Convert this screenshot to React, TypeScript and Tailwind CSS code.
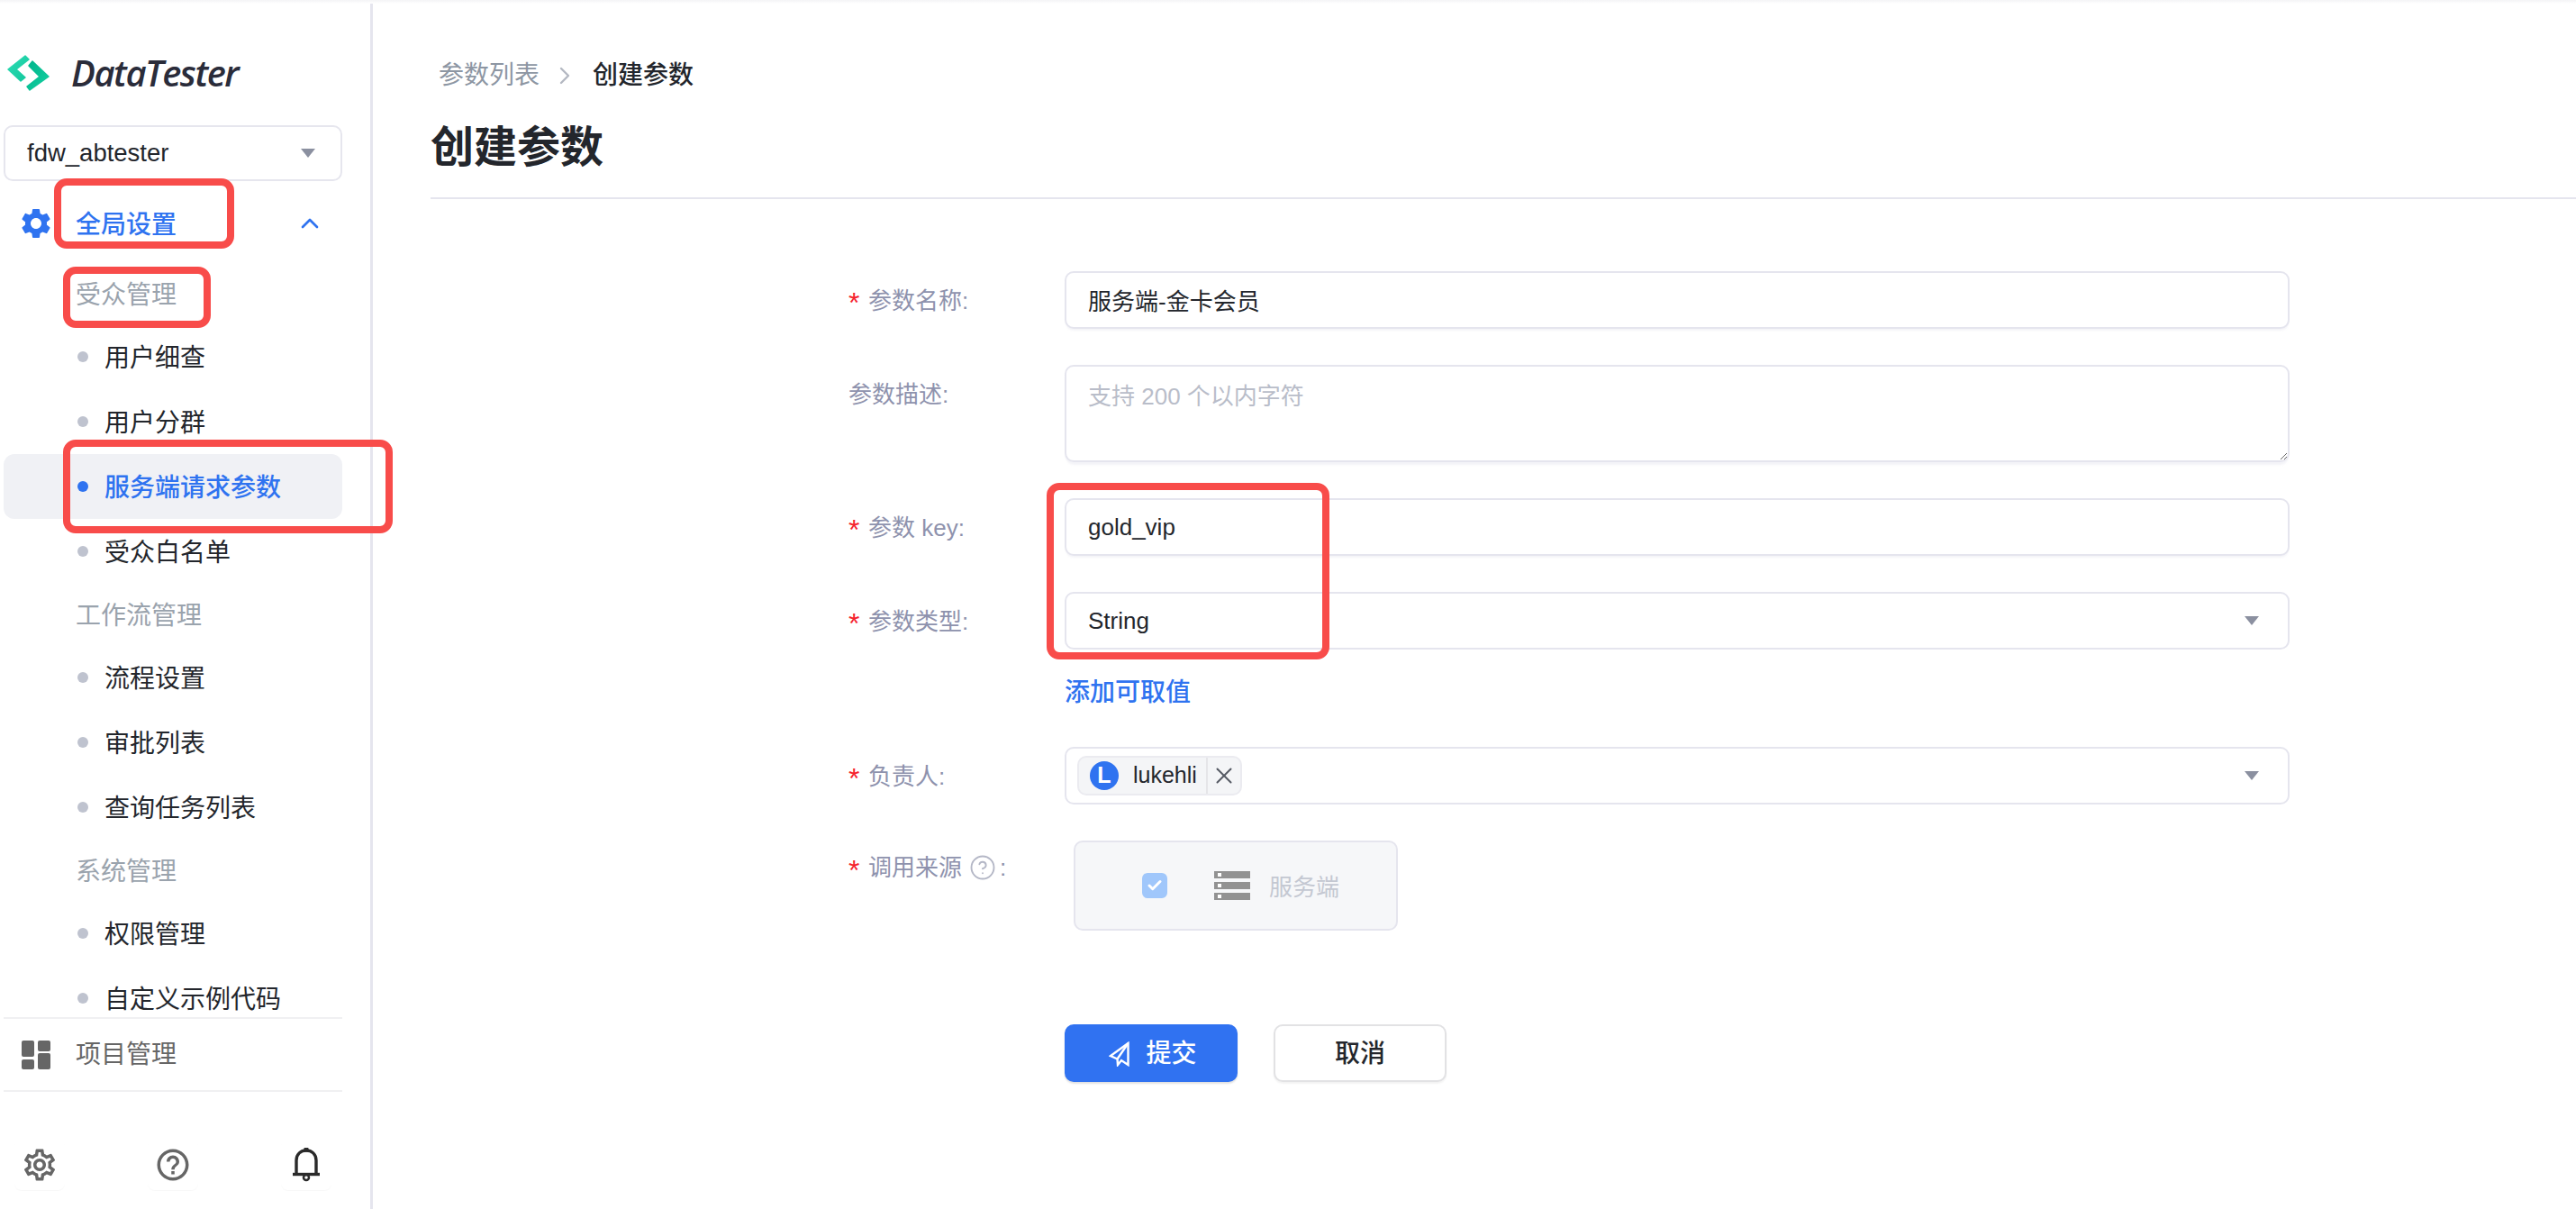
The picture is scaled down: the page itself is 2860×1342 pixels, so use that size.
import { Check, ChevronRight, ChevronUp, CircleHelp, X } from 'lucide-react';
import type { ReactNode } from 'react';
import { MdHelpOutline, MdOutlineSettings, MdSettings } from 'react-icons/md';

const font = 'font-["Liberation_Sans","Noto_Sans_CJK_SC",sans-serif]';

function Triangle() {
    return <span className="h-0 w-0 border-x-[8px] border-t-[10px] border-x-transparent border-t-[#8b90a0]" />;
}

function Logo() {
    return (
        <svg width="50" height="44" viewBox="0 0 50 44" className="mt-1 shrink-0">
            <defs>
                <linearGradient id="logoA" x1="0" y1="0" x2="1" y2="1">
                    <stop offset="0" stopColor="#2ddcb4" />
                    <stop offset="1" stopColor="#12c79c" />
                </linearGradient>
                <linearGradient id="logoB" x1="0" y1="0" x2="1" y2="1">
                    <stop offset="0" stopColor="#00b48c" />
                    <stop offset="1" stopColor="#14d0a0" />
                </linearGradient>
            </defs>
            <polygon points="20,1 24,5 10,16 20,25 15,29 1,16" fill="url(#logoA)" stroke="url(#logoA)" strokeWidth="1.500" strokeLinejoin="round" />
            <polygon points="28,7 46,24 25,39 22,35 36,24 24,12" fill="url(#logoB)" stroke="url(#logoB)" strokeWidth="1.500" strokeLinejoin="round" />
        </svg>
    );
}

function Item({ label, active }: { label: string; active?: boolean }) {
    return (
        <div className={active ? 'flex h-[72px] items-center rounded-xl bg-[#f0f1f5] pl-[82px]' : 'flex h-[72px] items-center pl-[82px]'}>
            <span className={active ? 'size-3 rounded-full bg-[#2f73f0]' : 'size-3 rounded-full bg-[#bfc3cf]'} />
            <span className={active ? 'ml-[18px] pt-1 text-[28px] font-medium text-[#2f73f0]' : 'ml-[18px] pt-1 text-[28px] text-[#23262c]'}>{label}</span>
        </div>
    );
}

function Section({ label }: { label: string }) {
    return <div className="flex h-[68px] items-center pl-[80px] pt-1 text-[28px] text-[#9aa3ad]">{label}</div>;
}

function Sidebar() {
    return (
        <aside className="flex h-full w-[414px] shrink-0 flex-col border-r-[3px] border-[#e5e5ee]">
            <div className="flex h-[135px] items-center pl-[8px] pt-[18px]">
                <Logo />
                <span className='ml-[21px] font-["Open_Sans"] text-[40px] font-semibold italic tracking-[-1.5px] text-[#2a2c3a]'>DataTester</span>
            </div>
            <div className="ml-1 flex h-[62px] w-[376px] items-center justify-between rounded-[10px] border-2 border-[#e6e6ee] pl-[24px] pr-[28px]">
                <span className="text-[27.5px] text-[#23262c]">fdw_abtester</span>
                <Triangle />
            </div>
            <div className="ml-1 mt-[11px] h-[917px] w-[376px] overflow-hidden">
                <div className="mb-2 flex h-[72px] items-center pl-4 text-[#2f73f0]">
                    <MdSettings size={40} />
                    <span className="ml-6 pt-1 text-[28px] font-medium">全局设置</span>
                    <ChevronUp size={32} strokeWidth={2} className="ml-[132px]" />
                </div>
                <Section label="受众管理" />
                <Item label="用户细查" />
                <Item label="用户分群" />
                <Item label="服务端请求参数" active />
                <Item label="受众白名单" />
                <Section label="工作流管理" />
                <Item label="流程设置" />
                <Item label="审批列表" />
                <Item label="查询任务列表" />
                <Section label="系统管理" />
                <Item label="权限管理" />
                <Item label="自定义示例代码" />
            </div>
            <div className="ml-1 flex h-[83px] w-[376px] items-center border-y-2 border-[#f0f0f2] pl-5 text-[#666666]">
                <svg width="32" height="32" viewBox="0 0 32 32" fill="currentColor">
                    <rect x="0" y="0" width="14" height="18" rx="2" />
                    <rect x="0" y="21" width="14" height="11" rx="2" />
                    <rect x="18" y="0" width="14" height="12" rx="2" />
                    <rect x="18" y="14" width="14" height="18" rx="2" />
                </svg>
                <span className="ml-[28px] text-[28px]">项目管理</span>
            </div>
            <div className="flex gap-[92px] pl-4 pt-[53px]">
                <div className="flex h-14 w-14 items-center justify-center rounded-lg text-[#666666] shadow-[0_1px_1px_rgba(0,0,0,0.03)]">
                    <MdOutlineSettings size={42} />
                </div>
                <div className="flex h-14 w-14 items-center justify-center rounded-lg text-[#666666] shadow-[0_1px_1px_rgba(0,0,0,0.03)]">
                    <MdHelpOutline size={42} />
                </div>
                <div className="flex h-14 w-14 items-center justify-center rounded-lg text-[#2a2a2a] shadow-[0_1px_1px_rgba(0,0,0,0.03)]">
                    <svg width="32" height="38" viewBox="0 0 32 38" fill="none" stroke="currentColor" strokeWidth="3.400">
                        <path d="M5 29V14C5 7 10 3 16 3S27 7 27 14V29" />
                        <path d="M1 29.500H31" />
                        <circle cx="16" cy="2" r="1" fill="currentColor" />
                        <circle cx="16" cy="33" r="3" strokeWidth="2.500" />
                    </svg>
                </div>
            </div>
        </aside>
    );
}

function Star() {
    return <span className="w-[22px] pt-[6px] text-[32px] leading-none text-[#f5222d]">*</span>;
}

function Label({ text, required }: { text: ReactNode; required?: boolean }) {
    return (
        <div className="flex h-16 w-[240px] shrink-0 items-center text-[26px] text-[#8e92ad]">
            {required && <Star />}
            <span className="pt-[2px]">{text}</span>
            <span className="pt-[2px]">:</span>
        </div>
    );
}

const boxClass = 'h-16 w-full rounded-[10px] border-2 border-[#e5e5ee] bg-white pl-6 text-[26px] text-[#23262c] shadow-[0_3px_2px_-1px_rgba(230,230,240,0.45)] outline-none';

function Form() {
    return (
        <div className="ml-[528px] mt-[80px] flex w-[1600px] flex-col">
            <div className="mb-10 flex">
                <Label text="参数名称" required />
                <input className={`${boxClass} pb-[2px]`} defaultValue="服务端-金卡会员" />
            </div>
            <div className="mb-10 flex">
                <Label text="参数描述" />
                <textarea
                    className="h-[108px] w-full rounded-[10px] border-2 border-[#e5e5ee] bg-white py-[14px] pl-6 text-[26px] text-[#23262c] shadow-[0_4px_2px_-1px_rgba(230,230,240,0.45)] outline-none placeholder:text-[#b9bdc9]"
                    placeholder="支持 200 个以内字符"
                />
            </div>
            <div className="mb-10 flex">
                <Label text="参数 key" required />
                <input className={boxClass} defaultValue="gold_vip" />
            </div>
            <div className="flex">
                <Label text="参数类型" required />
                <div className="flex h-16 w-full items-center justify-between rounded-[10px] border-2 border-[#e5e5ee] pl-6 pr-[32px] text-[26px] text-[#23262c]">
                    String
                    <Triangle />
                </div>
            </div>
            <div className="ml-[240px] mt-[28px] h-[40px] text-[28px] font-medium leading-[40px] text-[#2f73f0]">添加可取值</div>
            <div className="mt-10 flex">
                <Label text="负责人" required />
                <div className="flex h-16 w-full items-center justify-between rounded-[10px] border-2 border-[#e5e5ee] pl-3 pr-[32px]">
                    <div className="flex h-11 items-center rounded-[10px] border-2 border-[#ebebf0] bg-[#f4f5f7]">
                        <span className="ml-3 flex size-8 items-center justify-center rounded-full bg-[#2f73f0] text-[25px] font-bold text-white">L</span>
                        <span className="ml-4 mr-[10px] text-[25px] text-[#23262c]">lukehli</span>
                        <span className="flex h-full w-[38px] items-center justify-center border-l-2 border-[#e5e5e8] text-[#555a64]">
                            <X size={30} strokeWidth={1.6} />
                        </span>
                    </div>
                    <Triangle />
                </div>
            </div>
            <div className="mt-10 flex">
                <div className="flex h-[60px] w-[250px] shrink-0 items-center text-[26px] text-[#8e92ad]">
                    <Star />
                    调用来源
                    <CircleHelp size={30} strokeWidth={1.5} className="ml-[8px] text-[#b4b7c6]" />
                    <span className="ml-[4px]">:</span>
                </div>
                <div className="flex h-[100px] w-[360px] items-center rounded-[10px] border-2 border-[#e5e5ee] bg-[#f6f7f9] pl-[74px]">
                    <span className="flex size-7 items-center justify-center rounded-md bg-[#a0c7fb] text-white">
                        <Check size={18} strokeWidth={4} />
                    </span>
                    <svg width="40" height="32" viewBox="0 0 40 32" className="ml-[52px]">
                        <rect x="0" y="0" width="40" height="8" fill="#929292" />
                        <rect x="0" y="12" width="40" height="8" fill="#929292" />
                        <rect x="0" y="24" width="40" height="8" fill="#929292" />
                        <rect x="4" y="2" width="4" height="4" fill="#ffffff" />
                        <rect x="4" y="14" width="4" height="4" fill="#ffffff" />
                        <rect x="4" y="26" width="4" height="4" fill="#ffffff" />
                    </svg>
                    <span className="ml-[21px] pt-1 text-[26px] text-[#c4c8d2]">服务端</span>
                </div>
            </div>
            <div className="ml-[240px] mt-[104px] flex gap-10">
                <button className="flex h-16 w-[192px] items-center justify-center rounded-[10px] bg-[#3072f1] pl-[4px] pt-[2px] text-[28px] font-medium text-white shadow-[0_2px_2px_rgba(0,0,0,0.12)]">
                    <svg width="23" height="28" viewBox="0 0 23 28" fill="none" stroke="currentColor" strokeWidth="2.400" className="mr-[18px]">
                        <path d="M21.500 2 L2 16 L9.500 19.500 L10 26 L14 21 L21.500 26 Z" />
                        <path d="M21.500 2 L9.500 19.500" />
                    </svg>
                    提交
                </button>
                <button className="h-16 w-[192px] rounded-[10px] border-2 border-[#e2e2e4] bg-white pt-[2px] text-[28px] font-medium text-[#23262c] shadow-[0_2px_2px_rgba(0,0,0,0.05)]">取消</button>
            </div>
        </div>
    );
}

function Mark({ className }: { className: string }) {
    return <div className={`pointer-events-none absolute rounded-[14px] border-[8px] border-[#f84c4a] ${className}`} />;
}

export default function App() {
    return (
        <div className={`relative h-[1342px] w-[2860px] overflow-hidden bg-white ${font}`}>
            <div className="h-1 bg-gradient-to-b from-[#f4f4f6] to-white" />
            <div className="flex h-[1338px]">
                <Sidebar />
                <main className="min-w-0 flex-1">
                    <div className="ml-[73px] mt-[60px] flex h-10 items-center text-[28px]">
                        <span className="text-[#8d96a3]">参数列表</span>
                        <ChevronRight size={32} strokeWidth={1.8} className="ml-3 mr-[15px] text-[#b4b8c2]" />
                        <span className="font-medium text-[#23262c]">创建参数</span>
                    </div>
                    <h1 className="ml-16 mt-[30px] h-[60px] text-[48px] font-bold leading-[60px] text-[#23262c]">创建参数</h1>
                    <div className="ml-16 mt-[25px] h-0.5 bg-[#e5e5ee]" />
                    <Form />
                </main>
            </div>
            <Mark className="left-[60px] top-[198px] h-[78px] w-[200px]" />
            <Mark className="left-[70px] top-[296px] h-[68px] w-[164px]" />
            <Mark className="left-[70px] top-[488px] h-[104px] w-[366px]" />
            <Mark className="left-[1162px] top-[536px] h-[196px] w-[314px]" />
        </div>
    );
}
